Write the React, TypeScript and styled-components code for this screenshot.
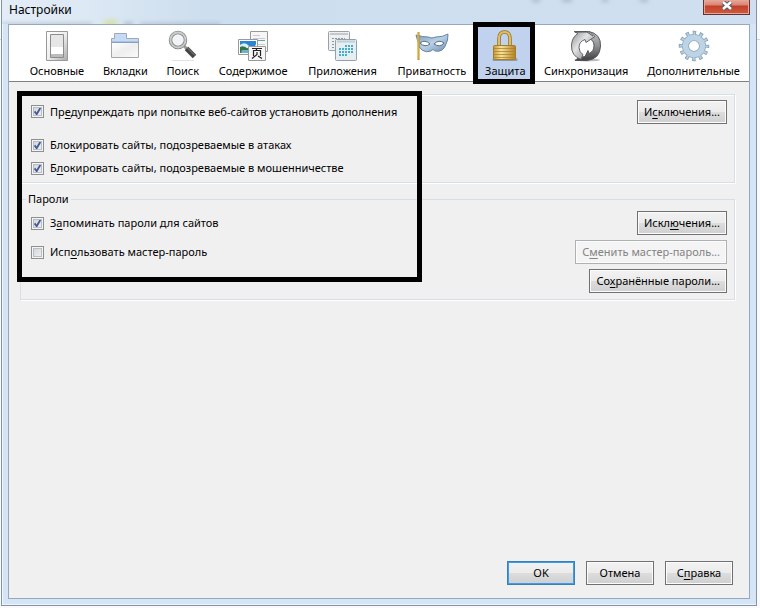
import React from 'react';
import styled, { createGlobalStyle, css } from 'styled-components';

const GlobalStyle = createGlobalStyle`
  *, *::before, *::after { box-sizing: border-box; }
  body {
    margin: 0;
    background: linear-gradient(#fafafb 39px, #d4d4d6 39px, #d4d4d6 40px, #fbf9f9 40px);
    font-family: 'Noto Sans', 'Open Sans', sans-serif;
    font-size: 11px;
    line-height: 16px;
    color: #000;
  }
  button, input { font: inherit; color: inherit; margin: 0; }
`;

const Desktop = styled.div`
  display: flex;
  min-height: 100vh;
  padding: 0 3px 2px 1px;
`;

const Window = styled.main`
  flex: 1;
  display: flex;
  flex-direction: column;
  padding: 0 6px 6px;
  border: 1px solid #8494a8;
  border-top: 0;
  background: #d5e5f6;
  box-shadow: inset 1px -1px 0 #eef6fd;
`;

const TitleBar = styled.header`
  position: relative;
  display: flex;
  justify-content: space-between;
  align-items: center;
  height: 24px;
  margin: 0 -6px;
  padding: 0 6px 0 7px;
  background: linear-gradient(90deg, #e3edf7 0, #dce8f4 90px, #cddeee 200px, #cfdff0 100%);
`;

const Title = styled.h1`
  position: relative;
  margin: 0;
  padding-bottom: 4px;
  font-size: 12px;
  line-height: 16px;
  font-weight: 400;
`;

const GlassSmudges = styled.svg`
  position: absolute;
  inset: 0;
  width: 100%;
  height: 100%;
`;

const CloseButton = styled.button`
  position: relative;
  align-self: flex-start;
  width: 47px;
  height: 15px;
  padding: 0;
  border: 1px solid #5f3436;
  border-top: 0;
  background: linear-gradient(#e8a799, #d98576 5px, #c2402a 6px, #cf5b3c);
  box-shadow: inset 0 0 0 1px #e6a596;
  svg { display: block; margin: 0 auto; }
`;

const Client = styled.div`
  flex: 1;
  display: flex;
  flex-direction: column;
  border: 1px solid #94a9be;
  background: #f0f0f0;
`;

const Toolbar = styled.div`
  display: grid;
  grid-template-columns: 74fr 63fr 52fr 89fr 90fr 89fr 58fr 104fr 111fr;
  padding-left: 11px;
  background: #fff;
  border-bottom: 1px solid #7f8280;
`;

const Tab = styled.button<{ $active?: boolean }>`
  position: relative;
  display: flex;
  flex-direction: column;
  align-items: center;
  min-width: 0;
  height: 56px;
  padding: 5px 0 0;
  border: 0;
  background: ${p => (p.$active ? '#c1d2ee' : 'transparent')};
  white-space: nowrap;
  svg { flex: none; display: block; margin-bottom: 1px; }
`;

const markerStyle = css`
  position: absolute;
  border: 5px solid #000;
  pointer-events: none;
`;

const TabMarker = styled.span`
  ${markerStyle}
  inset: -3px -1px -3px -3px;
`;

const Panel = styled.section`
  position: relative;
  flex: 1;
  display: flex;
  flex-direction: column;
  padding: 12px 14px 13px 11px;
`;

const PanelMarker = styled.div`
  ${markerStyle}
  left: 8px;
  top: 9px;
  width: 405px;
  height: 191px;
`;

const Group = styled.fieldset`
  min-width: 0;
  margin: 0;
  padding: 4px 7px 6px 10px;
  border: 1px solid #d5dfe5;
  box-shadow: 1px 1px 0 #fff, inset 1px 1px 0 #fff;
`;

const PasswordGroup = styled(Group)`
  margin-top: 8px;
  box-shadow: 1px 1px 0 #fff;
`;

const Legend = styled.legend`
  margin-left: -5px;
  padding: 0 2px;
`;

const Row = styled.div<{ $height: number; $gap?: number }>`
  display: flex;
  align-items: center;
  justify-content: space-between;
  height: ${p => p.$height}px;
  margin-top: ${p => p.$gap ?? 0}px;
`;

const EndRow = styled(Row)`
  justify-content: flex-end;
`;

const CheckLabel = styled.label`
  display: flex;
  align-items: center;
  gap: 6px;
`;

const Checkbox = styled.input`
  appearance: none;
  width: 13px;
  height: 13px;
  border: 1px solid #8e8f8f;
  background: linear-gradient(135deg, #cbcfd5, #f6f6f6);
  box-shadow: inset 0 0 0 1px #f4f4f4, inset 0 0 0 2px #b9bdc4;
  &:checked {
    background:
      url("data:image/svg+xml,%3Csvg xmlns='http://www.w3.org/2000/svg' viewBox='0 0 11 11'%3E%3Cpath d='M2.6 5.4 4.7 8.2 8.3 2' fill='none' stroke='%23405a97' stroke-width='1.8'/%3E%3C/svg%3E"),
      linear-gradient(135deg, #cbcfd5, #f6f6f6);
  }
`;

const Button = styled.button<{ $primary?: boolean }>`
  height: 24px;
  min-width: 68px;
  padding: 0 6px;
  border: 1px solid ${p => (p.$primary ? '#3c7fb1' : '#707070')};
  background: linear-gradient(#f2f2f2, #ebebeb 50%, #dddddd 50%, #cfcfcf);
  box-shadow: ${p => (p.$primary ? 'inset 0 0 0 1px #3c9df0' : 'inset 0 0 0 1px #fcfcfc')};
  line-height: 20px;
  white-space: nowrap;
  &:disabled {
    color: #838383;
    border-color: #adb2b5;
    background: #f4f4f4;
  }
`;

const Footer = styled.footer`
  display: flex;
  justify-content: flex-end;
  gap: 11px;
  margin-top: auto;
  padding-right: 2px;
`;

const Key = styled.u`
  text-underline-offset: 2px;
  text-decoration-skip-ink: none;
`;

const SwitchIcon = () => (
  <svg width="32" height="32" viewBox="0 0 32 32">
    <defs><linearGradient id="sw" x2="1" y2="1"><stop stopColor="#fff" /><stop offset=".5" stopColor="#eee" /><stop offset="1" stopColor="#aaa" /></linearGradient></defs>
    <path d="M5.500 1.500h21v29h-21z" fill="url(#sw)" stroke="#999" />
    <path d="M9.500 4.500h13v23h-13z" fill="#e6e6e6" stroke="#8c8c8c" />
    <path d="M10 17h12v7H10z" fill="#fff" /><path d="M10 24h12v3H10z" fill="#bbb" />
  </svg>
);

const FolderIcon = () => (
  <svg width="32" height="32" viewBox="0 0 32 32">
    <defs><linearGradient id="fo" x2="1" y2="1"><stop stopColor="#fff" /><stop offset=".5" stopColor="#eee" /><stop offset="1" stopColor="#fafafa" /></linearGradient></defs>
    <path d="M2.500 12V8.500h3V3.500h12v5h12V12z" fill="#c3dbf8" stroke="#a0a8b4" />
    <path d="M6 4h11v6H6z" fill="#c3dbf8" />
    <path d="M2.500 12.500h27v15h-27z" fill="url(#fo)" stroke="#a6a6a6" />
    <path d="M2 12.500h28" stroke="#86a0c8" />
  </svg>
);

const SearchIcon = () => (
  <svg width="32" height="32" viewBox="0 0 32 32">
    <path d="M5 30.500h22" stroke="#e2e2e2" />
    <path d="m16.500 15.500 4 4" stroke="#999" strokeWidth="3" />
    <path d="m19.500 18.500 8 8" stroke="#444" strokeWidth="5" />
    <path d="m20 17.500 8 8" stroke="#888" />
    <circle cx="11" cy="10" r="7.500" fill="#f1f4f6" stroke="#888" strokeWidth="3.500" />
    <circle cx="11" cy="10" r="7.500" fill="none" stroke="#ccc" strokeWidth="1.800" />
  </svg>
);

const ContentIcon = () => (
  <svg width="32" height="32" viewBox="0 0 32 32">
    <path d="M13.500 1.500h17v20h-17z" fill="#f6f6f6" stroke="#999" />
    <path d="M16 5.500h7M16 8.500h12M16 14.500h12" stroke="#ccc" /><path d="M20 10.500h8" stroke="#55a8b5" />
    <path d="M1.500 9.500h19v15h-19z" fill="#fff" stroke="#999" />
    <path d="M3 11h16v12H3z" fill="#2d85d0" /><path d="M3 15q5-4 9 1t7-2v4H3z" fill="#d9f0fa" />
    <path d="M3 17q4-2 8 2l8-2v6H3z" fill="#387344" /><path d="M5 20h9v3H4z" fill="#69b5c8" />
    <path d="M11.500 16.500h17v14h-17z" fill="#f6f6f6" stroke="#999" />
    <path d="M15 18.500h10M20 18.500l-1 2M16.500 26v-5.500h7V26M20 22v2.500l-5 4M21 26l4 2.500" fill="none" stroke="#222" strokeWidth="1.200" />
  </svg>
);

const AppsIcon = () => (
  <svg width="32" height="32" viewBox="0 0 32 32">
    <rect x="1.500" y="1.500" width="21" height="19" rx="1" fill="#eef0f1" stroke="#9ba0a4" />
    <path d="M3 4h18" stroke="#c5c9cc" strokeWidth="2" />
    <path d="M5 8.500h13M5 11.500h4M5 14.500h4M5 17.500h4" stroke="#8d959d" strokeDasharray="2 1" />
    <rect x="8.500" y="9.500" width="21" height="21" rx="1" fill="#e6eef2" stroke="#8fa1ac" />
    <path d="M10 11.500h18" stroke="#c2ccd2" strokeWidth="2" />
    <path d="M18 16h9M12 19h15M12 22h15M12 25h9" stroke="#45aec9" strokeWidth="2" strokeDasharray="2 1" />
  </svg>
);

const MaskIcon = () => (
  <svg width="34" height="32" viewBox="0 0 34 32">
    <defs><linearGradient id="ma" x2="1" y2="1"><stop stopColor="#7f9cba" /><stop offset=".5" stopColor="#b9cfe5" /><stop offset="1" stopColor="#6c8db0" /></linearGradient></defs>
    <path d="M1 5q7 2 12 2 4 2 8 0 7 0 12-3 0 7-2 10-1 4-4 6-3 2-7 1-2-3-4 0-5 2-9-1-4-3-4-8Z" fill="url(#ma)" stroke="#6786a5" />
    <path d="M5 13q5-4 10 1-5 4-10-1ZM19 14q5-5 10-1-4 5-10 1Z" fill="#fff" stroke="#55728f" />
    <path d="M3.500 2v28" stroke="#ba8b24" strokeWidth="2" /><path d="M3 2v27" stroke="#edc858" />
  </svg>
);

const LockIcon = () => (
  <svg width="32" height="32" viewBox="0 0 32 32">
    <defs><linearGradient id="lo"><stop stopColor="#c79a36" /><stop offset=".35" stopColor="#f7e29a" /><stop offset="1" stopColor="#b58125" /></linearGradient></defs>
    <path d="M5 29.500h22" stroke="#7b8190" strokeWidth="3" strokeLinecap="round" opacity=".7" />
    <path d="M10 16V9q0-7 5.500-7T21 9v7" fill="none" stroke="#94701f" strokeWidth="3.500" />
    <path d="M10 16V9q0-7 5.500-7T21 9v7" fill="none" stroke="#dfbd65" strokeWidth="2" />
    <rect x="4.500" y="15.500" width="22" height="14" rx="1" fill="url(#lo)" stroke="#a57d26" />
    <path d="M5 18.500h21M5 21.500h21M5 24.500h21M5 27.500h21" stroke="#aa8129" opacity=".75" />
  </svg>
);

const SyncIcon = () => (
  <svg width="32" height="32" viewBox="0 0 32 32">
    <defs>
      <linearGradient id="syl" x2="1" y2="1"><stop stopColor="#8b8d8e" /><stop offset=".4" stopColor="#e2e4e4" /><stop offset="1" stopColor="#6c6e70" /></linearGradient>
      <linearGradient id="syr" x2="0" y2="1"><stop stopColor="#c6c8c9" /><stop offset=".5" stopColor="#8d8f90" /><stop offset="1" stopColor="#3d3f41" /></linearGradient>
    </defs>
    <ellipse cx="17" cy="30" rx="13" ry="1.500" fill="#bbb" />
    <path d="M19 1.500Q31 4 30.500 16 30 29 17 30.500H5l4-3 6-1 3-6 1 3q5-2 5-8 0-6-6-7Z" fill="url(#syr)" stroke="#555759" />
    <path d="M4 1.500h14q4 1 7 5l-9 6-1-3q-6 2-6 8 0 5 4 7l-2 5Q1 26 1.500 15 2 7 8 3.500Z" fill="url(#syl)" stroke="#626466" />
    <path d="M5 2h12l6 4M10 30h7l6-2" fill="none" stroke="#4c4e50" />
  </svg>
);

const GearIcon = () => (
  <svg width="32" height="32" viewBox="0 0 32 32">
    <circle cx="16" cy="16" r="13" fill="none" stroke="#809fb9" strokeWidth="4.500" strokeDasharray="3.400 3.406" strokeDashoffset="1.700" />
    <circle cx="16" cy="16" r="8.500" fill="none" stroke="#87a4bc" strokeWidth="7" />
    <circle cx="16" cy="16" r="12.500" fill="none" stroke="#b5cde0" strokeWidth="4" strokeDasharray="1.800 4.745" strokeDashoffset=".9" />
    <circle cx="16" cy="16" r="8.500" fill="none" stroke="#bdd4e5" strokeWidth="5.400" />
  </svg>
);

const tabs = [
  { label: 'Основные', Icon: SwitchIcon },
  { label: 'Вкладки', Icon: FolderIcon },
  { label: 'Поиск', Icon: SearchIcon },
  { label: 'Содержимое', Icon: ContentIcon },
  { label: 'Приложения', Icon: AppsIcon },
  { label: 'Приватность', Icon: MaskIcon },
  { label: 'Защита', Icon: LockIcon, active: true },
  { label: 'Синхронизация', Icon: SyncIcon },
  { label: 'Дополнительные', Icon: GearIcon },
];

const Check = ({ children, checked }: { children: React.ReactNode; checked?: boolean }) => (
  <CheckLabel>
    <Checkbox type="checkbox" defaultChecked={checked} />
    <span>{children}</span>
  </CheckLabel>
);

export default function App() {
  return (
    <Desktop>
      <GlobalStyle />
      <Window>
        <TitleBar>
          <GlassSmudges aria-hidden="true">
            <defs><filter id="haze"><feGaussianBlur stdDeviation="2" /></filter></defs>
            <g filter="url(#haze)" fill="#8796a6" opacity=".5">
              <path d="M0 23h90v3H0zM122 22h9v4h-9zM138 23h80v3h-80z" />
              <path d="M102 20h13v6h-13z" fill="#d8d860" />
              <path d="M530-2h8v4h-8zM560-2h10v4h-10zM600-2h6v4h-6zM638-2h8v4h-8z" />
            </g>
          </GlassSmudges>
          <Title>Настройки</Title>
          <CloseButton aria-label="Закрыть">
            <svg width="14" height="12" viewBox="0 0 14 12">
              <path d="m3 1 8 7M11 1 3 8" stroke="#555b6b" strokeWidth="4.500" />
              <path d="m3 1 8 7M11 1 3 8" stroke="#fff" strokeWidth="2.500" />
            </svg>
          </CloseButton>
        </TitleBar>
        <Client>
          <Toolbar role="tablist">
            {tabs.map(({ label, Icon, active }) => (
              <Tab key={label} role="tab" aria-selected={!!active} $active={active}>
                <Icon />
                {label}
                {active && <TabMarker />}
              </Tab>
            ))}
          </Toolbar>
          <Panel>
            <Group>
              <Row $height={25}>
                <Check checked>Пр<Key>е</Key>дупреждать при попытке веб-сайтов установить дополнения</Check>
                <Button>И<Key>с</Key>ключения...</Button>
              </Row>
              <Row $height={16} $gap={13}>
                <Check checked>Бло<Key>к</Key>ировать сайты, подозреваемые в атаках</Check>
              </Row>
              <Row $height={16} $gap={7}>
                <Check checked>Б<Key>л</Key>окировать сайты, подозреваемые в мошенничестве</Check>
              </Row>
            </Group>
            <PasswordGroup>
              <Legend>Пароли</Legend>
              <Row $height={24}>
                <Check checked>З<Key>а</Key>поминать пароли для сайтов</Check>
                <Button>Искл<Key>ю</Key>чения...</Button>
              </Row>
              <Row $height={24} $gap={5}>
                <Check>Исп<Key>о</Key>льзовать мастер-пароль</Check>
                <Button disabled>С<Key>м</Key>енить мастер-пароль...</Button>
              </Row>
              <EndRow $height={24} $gap={5}>
                <Button>Со<Key>х</Key>ранённые пароли...</Button>
              </EndRow>
            </PasswordGroup>
            <Footer>
              <Button $primary>OK</Button>
              <Button>Отмена</Button>
              <Button>С<Key>п</Key>равка</Button>
            </Footer>
            <PanelMarker />
          </Panel>
        </Client>
      </Window>
    </Desktop>
  );
}
